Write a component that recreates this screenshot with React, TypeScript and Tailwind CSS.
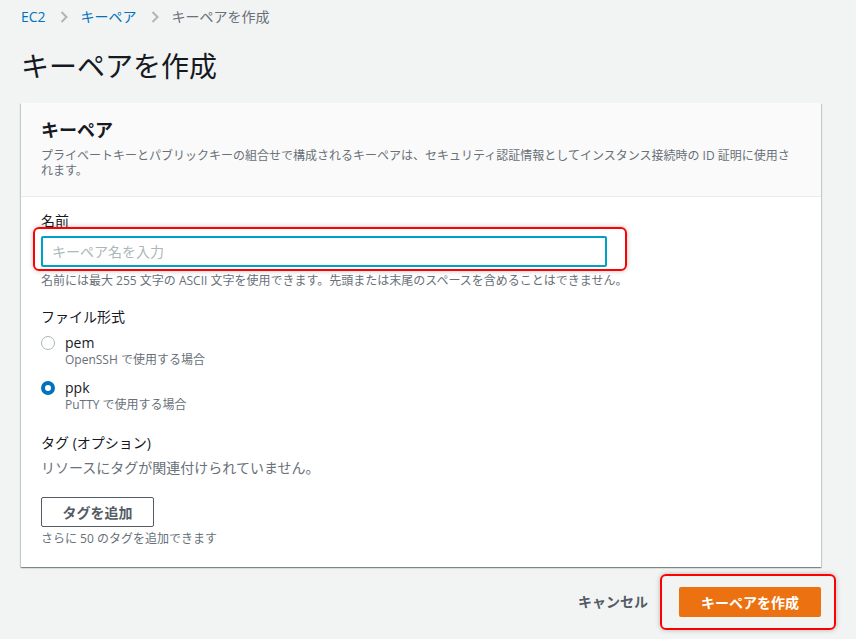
import React from "react";

const Chevron = () => (
  <svg width="8" height="12" viewBox="0 0 8 12" className="ml-[14px] mr-[13px] shrink-0">
    <path d="M1.5 1 L6.5 6 L1.5 11" fill="none" stroke="#aab7b8" strokeWidth="2" />
  </svg>
);

const Radio = ({ checked }: { checked?: boolean }) =>
  checked ? (
    <span className="mt-[2px] box-border h-[14px] w-[14px] shrink-0 rounded-full border-[4px] border-[#0073bb] bg-white" />
  ) : (
    <span className="mt-[2px] box-border h-[14px] w-[14px] shrink-0 rounded-full border-[1.5px] border-[#aab7b8] bg-white" />
  );

export default function App() {
  return (
    <div
      className="min-h-[639px] w-full bg-[#f2f3f3] pl-[21px] pt-[7px] text-[#16191f]"
      style={{ fontFamily: '"Open Sans", "Noto Sans CJK JP", sans-serif' }}
    >
      {/* breadcrumb */}
      <div className="flex items-center text-[14px] leading-[20px]">
        <span className="text-[#0073bb]">EC2</span>
        <Chevron />
        <span className="text-[#0073bb]">キーペア</span>
        <Chevron />
        <span className="text-[#687078]">キーペアを作成</span>
      </div>

      <h1 className="mt-[21px] text-[28px] font-normal leading-[36px] text-[#16191f]">キーペアを作成</h1>

      <div className="w-[800px]">
        {/* card */}
        <div className="mt-[19px] bg-white shadow-[0_1px_1px_0_rgba(0,28,36,0.3),1px_1px_1px_0_rgba(0,28,36,0.15),-1px_1px_1px_0_rgba(0,28,36,0.15)]">
          <div className="border-b border-[#eaeded] bg-[#fafafa] px-[20px] pb-[18px] pt-[15px]">
            <h2 className="text-[18px] font-bold leading-[24px] text-[#16191f]">キーペア</h2>
            <p className="mt-[6px] text-[12px] leading-[15px] text-[#687078]">
              プライベートキーとパブリックキーの組合せで構成されるキーペアは、セキュリティ認証情報としてインスタンス接続時の ID 証明に使用されます。
            </p>
          </div>

          <div className="px-[20px] pb-[20px] pt-[14px]">
            <div className="text-[14px] leading-[20px] text-[#16191f]">名前</div>
            <div className="relative mt-[5px] w-[566px]">
              <input
                className="box-border block h-[31px] w-full rounded-[2px] border-2 border-[#00a1c9] bg-white px-[9px] text-[14px] text-[#16191f] outline-none placeholder:text-[#aab7b8]"
                placeholder="キーペア名を入力"
                style={{ fontFamily: '"Open Sans", "Noto Sans CJK JP", sans-serif' }}
              />
              <div className="pointer-events-none absolute bottom-[-4px] left-[-8px] right-[-20px] top-[-9px] rounded-[6px] border-2 border-[#ff0000] shadow-[0_0_5px_rgba(0,0,0,0.25)]" />
            </div>
            <p className="mt-[6px] text-[12px] leading-[16px] text-[#687078]">
              名前には最大 255 文字の ASCII 文字を使用できます。先頭または末尾のスペースを含めることはできません。
            </p>

            <div className="mt-[18px] text-[14px] leading-[20px] text-[#16191f]">ファイル形式</div>

            <div className="mt-[7px] flex items-start gap-[10px]">
              <Radio />
              <div>
                <div className="text-[14px] leading-[18px] text-[#16191f]">pem</div>
                <div className="text-[12px] leading-[16px] text-[#687078]">OpenSSH で使用する場合</div>
              </div>
            </div>
            <div className="mt-[11px] flex items-start gap-[10px]">
              <Radio checked />
              <div>
                <div className="text-[14px] leading-[18px] text-[#16191f]">ppk</div>
                <div className="text-[12px] leading-[16px] text-[#687078]">PuTTY で使用する場合</div>
              </div>
            </div>

            <div className="mt-[20px] text-[14px] leading-[20px] text-[#16191f]">タグ (オプション)</div>
            <div className="mt-[5px] text-[14px] leading-[20px] text-[#687078]">リソースにタグが関連付けられていません。</div>
            <button className="mt-[19px] box-border flex h-[30px] w-[113px] items-center justify-center rounded-[2px] border border-[#545b64] bg-white text-[14px] font-bold text-[#545b64]">
              タグを追加
            </button>
            <p className="mt-[4px] text-[12px] leading-[16px] text-[#687078]">さらに 50 のタグを追加できます</p>
          </div>
        </div>

        {/* footer */}
        <div className="mt-[20px] flex items-center justify-end gap-[31px]">
          <button className="text-[14px] font-bold leading-[20px] text-[#545b64]">キャンセル</button>
          <div className="relative">
            <button className="flex h-[30px] w-[142px] items-center justify-center rounded-[2px] bg-[#ec7211] text-[14px] font-bold text-white">
              キーペアを作成
            </button>
            <div className="pointer-events-none absolute bottom-[-13px] left-[-19px] right-[-15px] top-[-13px] rounded-[6px] border-2 border-[#ff0000] shadow-[0_0_5px_rgba(0,0,0,0.25)]" />
          </div>
        </div>
      </div>
    </div>
  );
}
